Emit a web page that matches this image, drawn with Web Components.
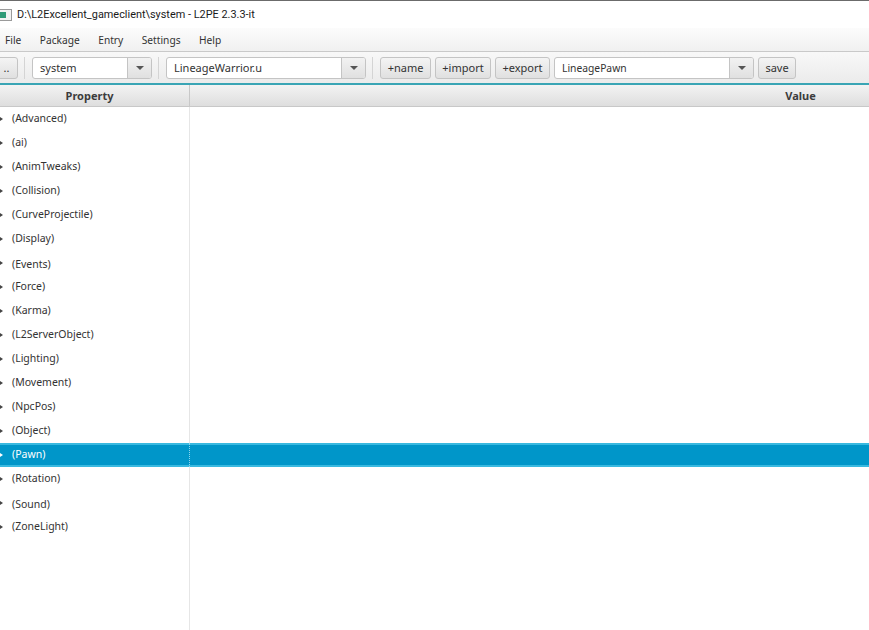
<!DOCTYPE html>
<html>
<head>
<meta charset="utf-8">
<title>L2PE</title>
<style>
  html, body { margin: 0; height: 100%; overflow: hidden; background: #fff; }
  body { font-family: "Noto Sans", sans-serif; }
</style>
</head>
<body>
<l2-window></l2-window>
<script>
class L2TitleBar extends HTMLElement {
  constructor() {
    super();
    this.attachShadow({ mode: "open" });
    this.shadowRoot.innerHTML = `
    <style>
      :host {
        display: flex;
        align-items: center;
        box-sizing: border-box;
        height: 28px;
        background: #fff;
        border-top: 1px solid #6b6b6b;
        gap: 5px;
        font: 10.9px Roboto, sans-serif;
        color: #1a1a1a;
      }
      svg { display: block; flex: none; margin-left: -3px; }
    </style>
    <svg width="15" height="14" viewBox="0 0 15 14">
      <rect x="0.5" y="1.5" width="14" height="11" fill="#f2f2f2" stroke="#9a9a9a"/>
      <rect x="2" y="4" width="7" height="6" fill="#2f9a77"/>
    </svg>
    <span><slot></slot></span>`;
  }
}
customElements.define("l2-title-bar", L2TitleBar);

class L2MenuBar extends HTMLElement {
  constructor() {
    super();
    this.attachShadow({ mode: "open" });
    this.shadowRoot.innerHTML = `
    <style>
      :host {
        display: flex;
        align-items: center;
        box-sizing: border-box;
        height: 24px;
        padding-left: 5px;
        gap: 18.5px;
        background: linear-gradient(#fcfcfc, #f0f0f0);
        border-bottom: 1px solid #c9c9c9;
        font-size: 10.2px;
        color: #333;
      }
    </style>
    <slot></slot>`;
  }
}
customElements.define("l2-menu-bar", L2MenuBar);

class L2Button extends HTMLElement {
  constructor() {
    super();
    this.attachShadow({ mode: "open" });
    this.shadowRoot.innerHTML = `
    <style>
      :host {
        display: flex;
        align-items: center;
        justify-content: center;
        box-sizing: border-box;
        height: 22px;
        padding: 0 4px;
        border: 1px solid #c4c4c4;
        border-radius: 3px;
        background: linear-gradient(#f4f4f4, #e0e0e0);
        font-size: 11px;
        color: #333;
      }
    </style>
    <slot></slot>`;
  }
}
customElements.define("l2-button", L2Button);

class L2Combo extends HTMLElement {
  constructor() {
    super();
    this.attachShadow({ mode: "open" });
    this.shadowRoot.innerHTML = `
    <style>
      :host {
        display: flex;
        box-sizing: border-box;
        height: 22px;
        border: 1px solid #c4c4c4;
        border-radius: 3px;
        background: #fff;
        font-size: 11px;
        color: #333;
      }
      .value { flex: 1; display: flex; align-items: center; padding-left: 7px; }
      .arrow {
        width: 23px;
        display: flex;
        align-items: center;
        justify-content: center;
        border-left: 1px solid #c4c4c4;
        background: linear-gradient(#f2f2f2, #e0e0e0);
        border-radius: 0 2px 2px 0;
      }
      .arrow::before {
        content: "";
        border: 4px solid transparent;
        border-top: 4px solid #555;
        border-bottom: 0;
      }
    </style>
    <div class="value"><slot></slot></div>
    <div class="arrow"></div>`;
  }
}
customElements.define("l2-combo", L2Combo);

class L2Toolbar extends HTMLElement {
  constructor() {
    super();
    this.attachShadow({ mode: "open" });
    this.shadowRoot.innerHTML = `
    <style>
      :host {
        display: flex;
        align-items: center;
        box-sizing: border-box;
        height: 33px;
        gap: 4px;
        margin-left: -5px;
        background: linear-gradient(#f8f8f8, #ebebeb);
        border-bottom: 2px solid #3aa5b5;
      }
    </style>
    <slot></slot>`;
  }
}
customElements.define("l2-toolbar", L2Toolbar);

class L2Sep extends HTMLElement {
  constructor() {
    super();
    this.attachShadow({ mode: "open" });
    this.shadowRoot.innerHTML = `
    <style>
      :host {
        display: block;
        width: 1px;
        height: 22px;
        margin: 0 3px 0 2px;
        background: #d4d4d4;
      }
    </style>`;
  }
}
customElements.define("l2-sep", L2Sep);

class L2TableHeader extends HTMLElement {
  constructor() {
    super();
    this.attachShadow({ mode: "open" });
    this.shadowRoot.innerHTML = `
    <style>
      :host {
        display: grid;
        grid-template-columns: 190px 1fr;
        box-sizing: border-box;
        height: 22px;
        background: linear-gradient(#f3f3f3, #dedede);
        border-bottom: 1px solid #c8c8c8;
        font-size: 11px;
        font-weight: bold;
        color: #3c3c3c;
      }
      div { display: flex; align-items: center; justify-content: center; }
      .first { border-right: 1px solid #c8c8c8; padding-right: 10px; }
      .second { padding-left: 542px; }
    </style>
    <div class="first">Property</div>
    <div class="second">Value</div>`;
  }
}
customElements.define("l2-table-header", L2TableHeader);

class L2Row extends HTMLElement {
  constructor() {
    super();
    this.attachShadow({ mode: "open" });
    this.shadowRoot.innerHTML = `
    <style>
      :host {
        display: grid;
        grid-template-columns: 190px 1fr;
        box-sizing: border-box;
        height: 24px;
        font-size: 10.5px;
        color: #333;
      }
      :host([low]) .name { padding-top: 1px; padding-bottom: 0; }
      :host([selected]) {
        background: #0096c9;
        box-shadow: inset 0 2px 0 #39b9e0, inset 0 -2px 0 #39b9e0;
        color: #fff;
      }
      .name {
        display: flex;
        align-items: center;
        box-sizing: border-box;
        padding: 0 0 3px 12px;
        position: relative;
        border-right: 1px solid #e6e6e6;
      }
      .name::before {
        content: "";
        position: absolute;
        left: 0;
        top: 50%;
        margin-top: -2px;
        border: 2px solid transparent;
        border-left: 3px solid #444;
        border-right: 0;
      }
      :host([selected]) .name::before { border-left-color: #fff; }
      :host([selected]) .name { border-right: 1px dotted #8fd6ee; }
    </style>
    <div class="name"><slot></slot></div>
    <div></div>`;
  }
}
customElements.define("l2-row", L2Row);

class L2Table extends HTMLElement {
  constructor() {
    super();
    this.attachShadow({ mode: "open" });
    this.shadowRoot.innerHTML = `
    <style>
      :host {
        display: grid;
        grid-template-columns: 190px 1fr;
        flex: 1;
        min-height: 0;
      }
      .rows { grid-column: 1 / 3; grid-row: 1; z-index: 1; }
      .line { grid-column: 1; grid-row: 1; border-right: 1px solid #e6e6e6; }
    </style>
    <div class="line"></div>
    <div class="rows"><slot></slot></div>`;
  }
}
customElements.define("l2-table", L2Table);

class L2Window extends HTMLElement {
  constructor() {
    super();
    this.attachShadow({ mode: "open" });
    const props = ["(Advanced)", "(ai)", "(AnimTweaks)", "(Collision)", "(CurveProjectile)", "(Display)",
      "(Events)", "(Force)", "(Karma)", "(L2ServerObject)", "(Lighting)", "(Movement)", "(NpcPos)",
      "(Object)", "(Pawn)", "(Rotation)", "(Sound)", "(ZoneLight)"];
    const rows = props.map(p => {
      const attrs = p === "(Pawn)" ? "selected" : (p === "(Events)" || p === "(Sound)") ? "low" : "";
      return `<l2-row ${attrs}>${p}</l2-row>`;
    }).join("");
    this.shadowRoot.innerHTML = `
    <style>
      :host { display: flex; flex-direction: column; width: 869px; height: 630px; overflow: hidden; }
    </style>
    <l2-title-bar>D:\\L2Excellent_gameclient\\system - L2PE 2.3.3-it</l2-title-bar>
    <l2-menu-bar><span>File</span><span>Package</span><span>Entry</span><span>Settings</span><span>Help</span></l2-menu-bar>
    <l2-toolbar>
      <l2-button style="width:23px">..</l2-button>
      <l2-sep></l2-sep>
      <l2-combo style="width:120px">system</l2-combo>
      <l2-sep></l2-sep>
      <l2-combo style="width:200px">LineageWarrior.u</l2-combo>
      <l2-sep></l2-sep>
      <l2-button style="width:51px">+name</l2-button>
      <l2-button style="width:56px">+import</l2-button>
      <l2-button style="width:55px">+export</l2-button>
      <l2-combo style="width:200px;font-size:10.3px">LineagePawn</l2-combo>
      <l2-button style="width:38px">save</l2-button>
    </l2-toolbar>
    <l2-table-header></l2-table-header>
    <l2-table>${rows}</l2-table>`;
  }
}
customElements.define("l2-window", L2Window);
</script>
</body>
</html>
